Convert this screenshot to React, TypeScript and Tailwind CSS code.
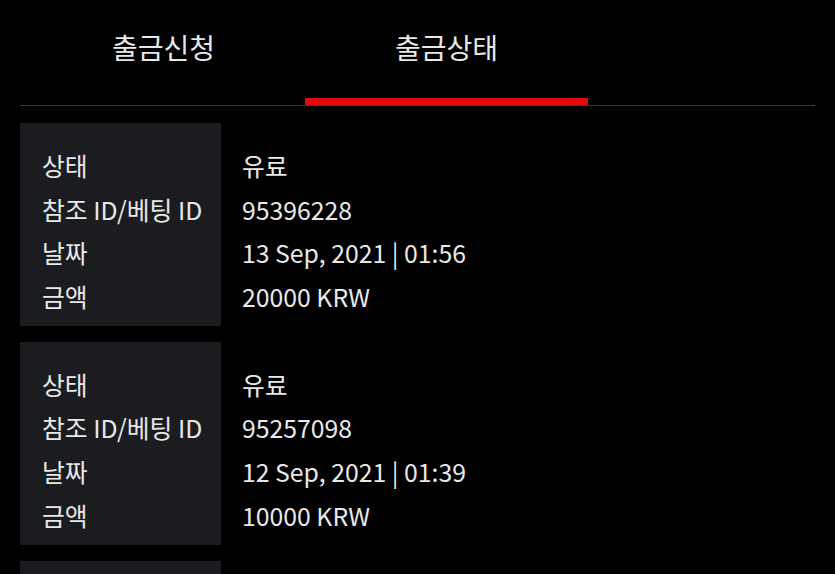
import React from "react";

type Withdrawal = {
  status: string;
  refId: string;
  date: string;
  amount: string;
};

const rows: Withdrawal[] = [
  { status: "유료", refId: "95396228", date: "13 Sep, 2021 | 01:56", amount: "20000 KRW" },
  { status: "유료", refId: "95257098", date: "12 Sep, 2021 | 01:39", amount: "10000 KRW" },
  { status: "유료", refId: "95117283", date: "11 Sep, 2021 | 22:10", amount: "10000 KRW" },
];

const labels = ["상태", "참조 ID/베팅 ID", "날짜", "금액"];

function Card({ item }: { item: Withdrawal }) {
  const values = [item.status, item.refId, item.date, item.amount];
  return (
    <div className="flex">
      <div className="w-[201px] shrink-0 bg-[#1b1c20] pl-[22px] pt-[21px] pb-[7px]">
        {labels.map((l) => (
          <div key={l} className="h-[43.7px] whitespace-nowrap leading-[43.7px]">
            {l}
          </div>
        ))}
      </div>
      <div className="pl-[21px] pt-[21px] pb-[7px]">
        {values.map((v, i) => (
          <div key={i} className="h-[43.7px] whitespace-nowrap leading-[43.7px]">
            {v}
          </div>
        ))}
      </div>
    </div>
  );
}

export default function App() {
  return (
    <div
      className="h-[574px] w-[835px] overflow-hidden bg-black px-[20px] text-[24.8px] text-[#e8e8e8]"
      style={{ fontFamily: '"Noto Sans CJK KR", "Noto Sans", sans-serif' }}
    >
      <div className="flex border-b border-[#3a3b40] pl-[2px]">
        <div className="flex h-[105px] w-[283px] items-start justify-center pt-[26px] text-[28px]">
          출금신청
        </div>
        <div className="relative flex h-[105px] w-[283px] items-start justify-center pt-[26px] text-[28px]">
          출금상태
          <span className="absolute bottom-0 left-0 right-0 h-[7px] bg-[#e00c0c]" />
        </div>
      </div>
      <div className="mt-[17px] flex flex-col gap-[16px]">
        {rows.map((r, i) => (
          <Card key={i} item={r} />
        ))}
      </div>
    </div>
  );
}
